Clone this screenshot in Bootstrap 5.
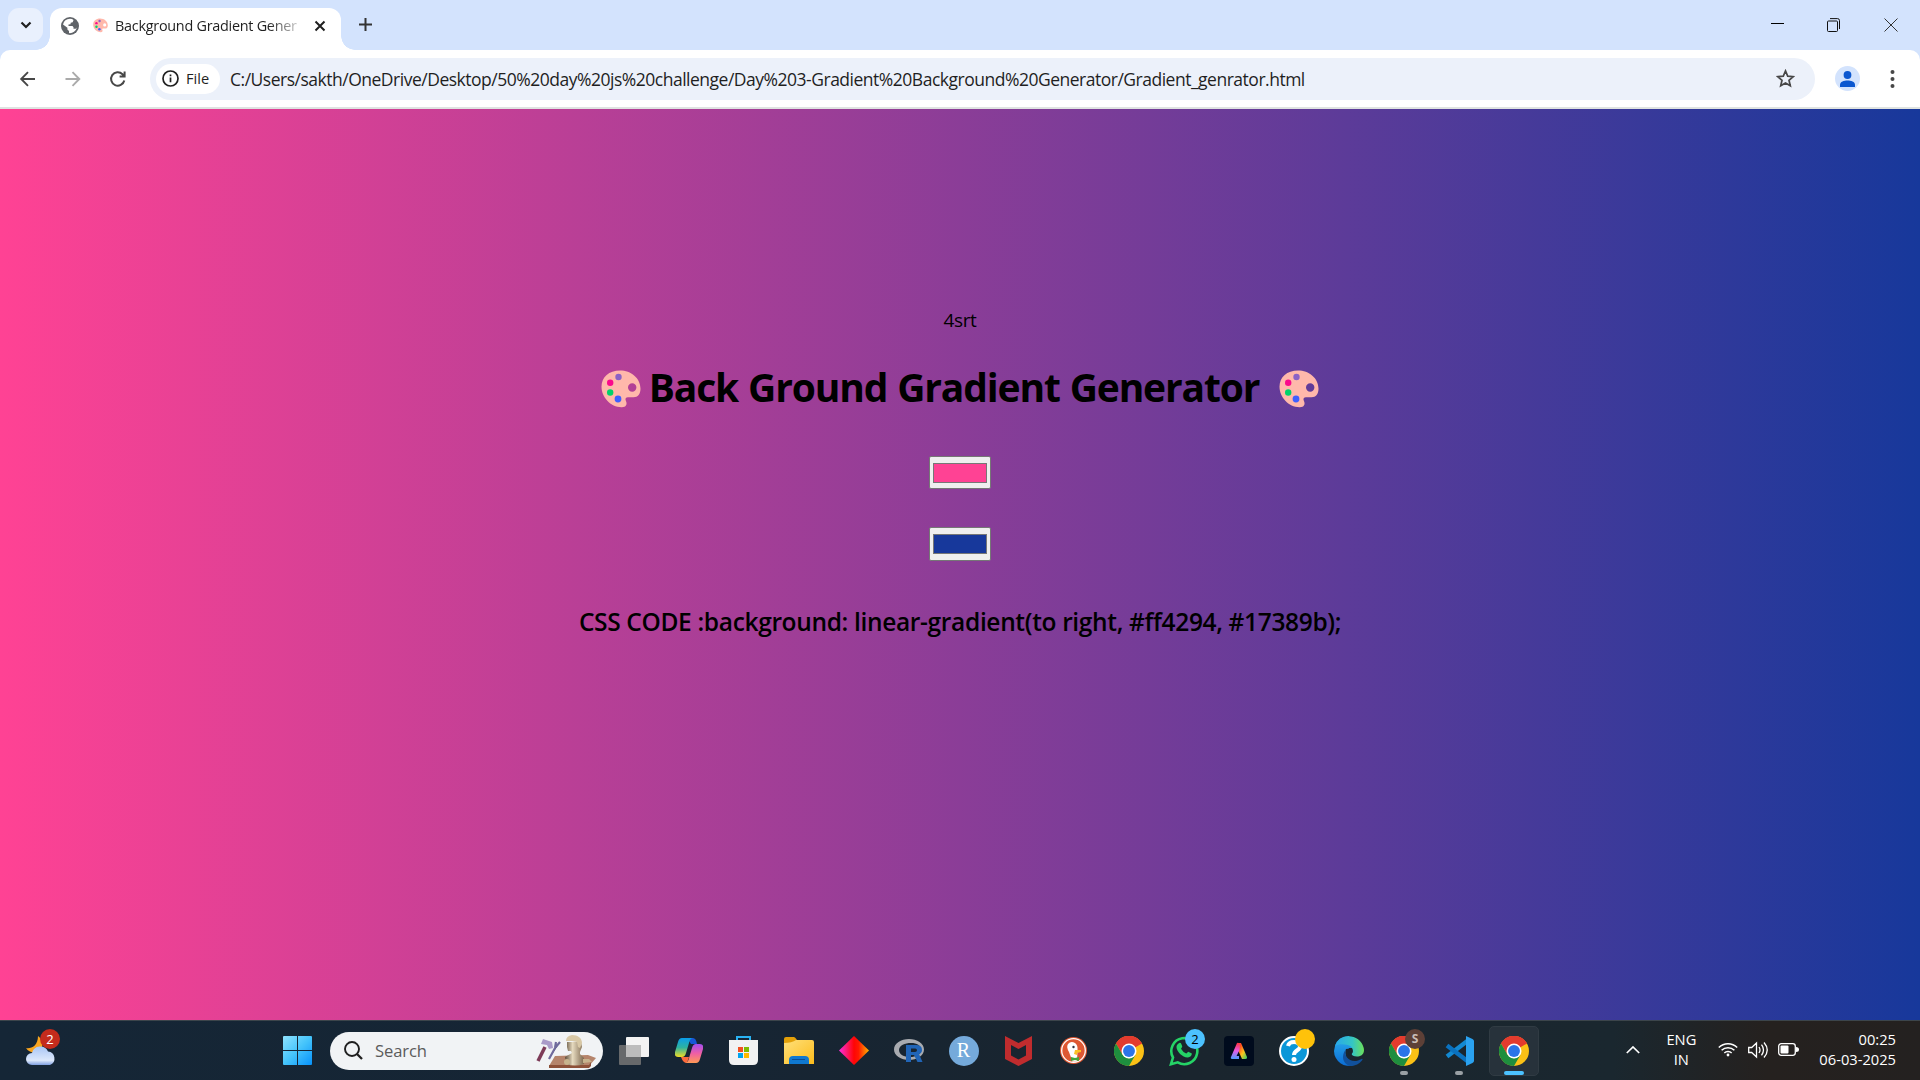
<!DOCTYPE html>
<html lang="en">
<head>
<meta charset="utf-8">
<title>Background Gradient Generator</title>
<link href="https://cdn.jsdelivr.net/npm/bootstrap@5.3.0/dist/css/bootstrap.min.css" rel="stylesheet">
<style>
html,body{height:100%;overflow:hidden}
body{font-family:"Open Sans","Noto Sans",sans-serif;color:#000;width:1920px;height:1080px}
svg{display:block;flex:none}
.tabstrip{height:50px;background:#d3e3fd}
.tab-search{width:35px;height:34px;border-radius:11px;background:#e9f0fd;margin:8px 0 0 8px}
.tab-item{width:291px;height:42px;margin:8px 0 0 7px;background:#fff;border-radius:12px 12px 0 0;padding:0 15px 7px 11px}
.tab-item::before,.tab-item::after{content:"";position:absolute;bottom:0;width:14px;height:14px}
.tab-item::before{left:-14px;background:radial-gradient(circle at 0 0,transparent 13.5px,#fff 14px)}
.tab-item::after{right:-14px;background:radial-gradient(circle at 100% 0,transparent 13.5px,#fff 14px)}
.tab-icon{margin-left:14px}
.tab-title{font-size:14.4px;letter-spacing:-.26px;margin-left:7px;color:#1f1f1f;-webkit-mask-image:linear-gradient(90deg,#000 84%,rgba(0,0,0,.25) 100%);mask-image:linear-gradient(90deg,#000 84%,rgba(0,0,0,.25) 100%)}
.tab-add{margin:18px 0 0 18px}
.win-buttons{height:49px;padding-right:22px}
.toolbar-top{height:59px;background:#d3e3fd}
.toolbar-in{height:59px;background:#fff;border-bottom:2px solid #dfe3e1;border-radius:10px 10px 0 0;padding-left:14px}
.nav-icons{gap:17px;margin-right:18px}
.omni{width:1665px;height:42px;border-radius:21px;background:#ecf1fa;padding:0 20px 0 6px}
.file-chip{width:64px;height:30px;border-radius:15px;background:#fff;padding-left:6px;gap:7px;font-size:14.6px;font-weight:500;color:#1f1f1f}
.url-text{font-size:17.5px;letter-spacing:-.49px;color:#1f1f1f;margin-left:10px;padding-top:1px}
.avatar{width:25px;height:25px;border-radius:50%;background:#d3e3fd;margin:0 30px 0 20px}
.stage{height:911px;background:linear-gradient(to right,#ff4294,#17389b);padding-top:196px}
.tag-line{font-size:19px;line-height:30px;letter-spacing:-.4px}
.headline{font-size:39px;font-weight:700;line-height:54px;margin-top:26px;padding-top:2px;letter-spacing:-1.15px}
.headline span{margin:-3px 20px 0 8px;word-spacing:1px}
.swatch{width:62px;height:33px;background:#efefef;border:1px solid #767676;border-radius:2px;padding:6px 3px}
.swatch i{display:block;width:54px;height:20px;border:1px solid #777}
.swatch-a{margin-top:42px}
.swatch-b{margin-top:38px;height:34px}
.css-code{font-size:24.5px;font-weight:600;line-height:36px;letter-spacing:-.34px;margin-top:43px}
.taskbar{height:60px;border-top:1px solid #3c454b;background:linear-gradient(90deg,#152636,#162534 35%,#1a252e 62%,#1a272f 84%,#25211f 92%,#242120)}
.weather{width:270px;padding-left:26px}
.weather-count{left:40px;top:-7px;background:#c42b1c}
.cell{width:55px;height:59px}
.find-box{width:273px;height:38px;border-radius:19px;background:#f1f3f5;margin:0 3px 0 5px;padding-left:14px;color:#5b5b5b;font-size:16.6px;letter-spacing:-.1px}
.find-box span{margin:1px 0 0 12px}
.find-art{margin-right:7px}
.r-studio{width:30px;height:30px;background:#75aadb;font:20px "Liberation Serif",serif}
.is-open{width:50px;height:50px;border-radius:5px;background:#27323b;border:1px solid #303b43}
.dash{bottom:5px;left:50%;transform:translateX(-50%);width:8px;height:4px;border-radius:2px;background:#9aa0a4}
.dash.on{width:20px;background:#4cc2ff}
.bubble{width:20px;height:20px;border-radius:50%;font-size:13px;line-height:20px;text-align:center}
.cell .bubble{right:6px;top:8px;background:#4cc2ff}
.cell .bubble-gold{background:#ffc20a}
.cell .bubble-s{background:#5d4037;color:#c9bdb8;font-size:12px}
.tray{color:#fff;font-size:14.7px;line-height:20px;padding:0 24px 2px 0}
.tray div{margin-top:-2px}
.lang{width:30px;margin:0 22px 0 26px}
</style>
<script src="https://cdn.jsdelivr.net/npm/bootstrap@5.3.0/dist/js/bootstrap.bundle.min.js"></script>
</head>
<body class="d-flex flex-column">
<svg width="0" height="0" class="position-absolute">
<defs>
<symbol id="palette" viewBox="0 0 40 38"><path fill="#ffb8ab" fill-rule="evenodd" d="M19 0.4C8 .4.5 7 .5 16.500c0 11 9 20.300 20 20.800 4.500.2 6-3 4.500-6-1.200-2.600-.2-4 2-4h5.500c4.500 0 7-3.500 7-8.500C39.500 8 30 .4 19 .4zM31.200 13.300a4.200 4.200 0 1 1 0 8.400 4.200 4.200 0 0 1 0-8.400z"/><circle cx="17.500" cy="7" r="3.200" fill="#8b62c6"/><circle cx="9.200" cy="12.700" r="3.200" fill="#fa0a8c"/><circle cx="9.200" cy="22.500" r="3.200" fill="#00d26a"/><circle cx="17" cy="29" r="3.400" fill="#3f5fff"/></symbol>
<symbol id="chrome" viewBox="0 0 48 48"><circle cx="24" cy="24" r="24" fill="#fbc116"/><path fill="#e33b2e" d="M24 24 3.200 12A24 24 0 0 1 44.800 12z"/><path fill="#e33b2e" d="M3.200 12 13.600 30 24 12H44.800A24 24 0 0 0 3.200 12z"/><path fill="#1e8e3e" d="M3.200 12 13.600 30 24 36 34.400 30 24 48A24 24 0 0 1 3.200 12z"/><circle cx="24" cy="24" r="12" fill="#fff"/><circle cx="24" cy="24" r="9.500" fill="#2b74e8"/></symbol>
</defs>
</svg>

<header class="tabstrip d-flex align-items-start">
  <div class="tab-search d-flex align-items-center justify-content-center"><svg width="12" height="8" viewBox="0 0 12 8" fill="none" stroke="#1f1f1f" stroke-width="2.200"><path d="M1.500 1.500 6 6l4.500-4.500"/></svg></div>
  <div class="tab-item position-relative d-flex align-items-center">
    <svg width="18" height="18" viewBox="0 0 18 18"><circle cx="9" cy="9" r="9" fill="#5f6368"/><path fill="#fff" d="M9 1.800 11 2l1.500 1-.8 2.200-2 .6-.2 1.500-2 .2v1.500h4l1 1.200v1.600h2.200l1.200-1.200A7.200 7.200 0 0 1 8 16.100v-2.200L6.400 12.500v-1.800L2 7.400A7.300 7.300 0 0 1 9 1.800z"/></svg>
    <svg class="tab-icon" width="15" height="15"><use href="#palette"/></svg>
    <div class="tab-title text-nowrap">Background Gradient Gener</div>
    <svg class="ms-auto" width="12" height="12" viewBox="0 0 12 12" stroke="#1f1f1f" stroke-width="2"><path d="m1.500 1.500 9 9m0-9-9 9"/></svg>
  </div>
  <svg class="tab-add" width="13" height="13" viewBox="0 0 13 13" stroke="#333" stroke-width="2"><path d="M6.500 0v13M0 6.500h13"/></svg>
  <div class="win-buttons ms-auto d-flex align-items-center">
    <svg width="56" height="13" viewBox="0 0 56 13"><path stroke="#000" d="M0 5.500h13"/></svg>
    <svg width="57" height="14" viewBox="0 0 57 14" fill="none" stroke="#111"><rect x=".5" y="3" width="10" height="10.500" rx="1"/><path d="M3 .6h7.500q2 0 2 2V11"/></svg>
    <svg width="14" height="14" viewBox="0 0 14 14" stroke="#333"><path d="m.5.5 13 13m0-13-13 13"/></svg>
  </div>
</header>

<div class="toolbar-top">
<nav class="toolbar-in d-flex align-items-center">
  <div class="nav-icons d-flex align-items-center">
  <svg width="28" height="28" viewBox="0 0 28 28" fill="none" stroke="#474747" stroke-width="1.900"><path d="M21 14H7.500m6.500-6.800L7.200 14l6.800 6.800"/></svg>
  <svg width="28" height="28" viewBox="0 0 28 28" fill="none" stroke="#aaa" stroke-width="1.900"><path d="M6.500 14H20M13.500 7.200l6.800 6.800-6.800 6.800"/></svg>
  <svg width="28" height="28" viewBox="0 0 28 28" fill="none" stroke="#474747" stroke-width="2"><path d="M20.300 15.500a6.700 6.700 0 1 1-1.800-6.300l1.700 1.800M20.600 6.500v5h-5"/></svg>
  </div>
  <div class="omni d-flex align-items-center">
    <div class="file-chip d-flex align-items-center"><svg width="17" height="17" viewBox="0 0 17 17" fill="none" stroke="#1f1f1f" stroke-width="1.700"><circle cx="8.500" cy="8.500" r="7.500"/><path d="M8.500 7.600v4.600M8.500 4.600v1.700"/></svg><span>File</span></div>
    <div class="url-text text-nowrap">C:/Users/sakth/OneDrive/Desktop/50%20day%20js%20challenge/Day%203-Gradient%20Background%20Generator/Gradient_genrator.html</div>
    <svg class="ms-auto" width="19" height="19" viewBox="0 0 19 19" fill="none" stroke="#474747" stroke-width="1.700"><path d="m9.500 1.900 2.200 5.200 5.600.5-4.300 3.700 1.300 5.500-4.800-2.900-4.800 2.900L6 11.300 1.700 7.600l5.600-.5z"/></svg>
  </div>
  <div class="avatar d-flex align-items-center justify-content-center"><svg width="15" height="16" viewBox="0 0 15 16" fill="#0b57d0"><circle cx="7.500" cy="4" r="3.900"/><path d="M0 16v-2.300C0 11 4 9.600 7.500 9.600S15 11 15 13.700V16z"/></svg></div>
  <svg width="5" height="18" viewBox="0 0 5 18" fill="#474747"><circle cx="2.500" cy="2" r="2"/><circle cx="2.500" cy="9" r="2"/><circle cx="2.500" cy="16" r="2"/></svg>
</nav>
</div>

<main class="stage d-flex flex-column align-items-center">
  <div class="tag-line">4srt</div>
  <h1 class="headline d-flex align-items-center mb-0 text-nowrap"><svg width="40" height="38"><use href="#palette"/></svg><span>Back Ground Gradient Generator</span><svg width="40" height="38"><use href="#palette"/></svg></h1>
  <div class="swatch swatch-a"><i style="background:#ff4294"></i></div>
  <div class="swatch swatch-b"><i style="background:#17389b"></i></div>
  <div class="css-code text-nowrap">CSS CODE :background: linear-gradient(to right, #ff4294, #17389b);</div>
</main>

<footer class="taskbar d-flex align-items-center">
  <div class="weather position-relative">
    <svg width="30" height="30" viewBox="0 0 30 30"><defs><linearGradient id="cl" x2="0" y2="1"><stop stop-color="#a9c6f5"/><stop offset=".75" stop-color="#dce8fb"/><stop offset="1" stop-color="#7f9fe0"/></linearGradient></defs><path fill="#f9a51f" d="M12 0c5 4 6 10 2 14S3 17 0 12c5 1 12-2 12-12z"/><path fill="url(#cl)" d="M6 29a6 6 0 0 1 0-12 8.500 8.500 0 0 1 16-1.500A7 7 0 0 1 24 29z"/></svg>
    <span class="weather-count bubble position-absolute text-white">2</span>
  </div>
  <div class="cell d-flex align-items-center justify-content-center"><svg width="29" height="29" viewBox="0 0 29 29"><defs><linearGradient id="wn" gradientUnits="userSpaceOnUse" x2="29" y2="29"><stop stop-color="#8fe3ff"/><stop offset=".5" stop-color="#45c4fb"/><stop offset="1" stop-color="#0792fb"/></linearGradient></defs><path fill="url(#wn)" d="M0 1q0-1 1-1h13v14H0zM15 0h13q1 0 1 1v13H15zM0 15h14v14H1q-1 0-1-1zM15 15h14v13q0 1-1 1H15z"/></svg></div>
  <div class="find-box d-flex align-items-center">
    <svg width="19" height="19" viewBox="0 0 19 19" fill="none" stroke="#1f1f1f" stroke-width="1.900"><circle cx="8" cy="8" r="7"/><path stroke-width="2.300" d="m13 13 5 5"/></svg>
    <span>Search</span>
    <svg class="find-art ms-auto" width="60" height="34" viewBox="0 0 60 34"><defs><linearGradient id="st"><stop stop-color="#5c4c3a"/><stop offset=".4" stop-color="#e6dabf"/><stop offset="1" stop-color="#7c674e"/></linearGradient></defs><path fill="#b5846b" d="m19 22 33-1 8 3-7 8H13z"/><path fill="#8d5038" d="M13 31h40l2-3v4l-2 2H13z"/><path stroke="#7d3b58" stroke-width="3.500" d="M2 27 9 13"/><path fill="#a99ac8" d="m7 5 9 3 1 6-4 1-2-4-6-1z"/><path stroke="#6f6a9c" stroke-width="2.200" d="m13 25 6-11 5-6m-5 6 1-6"/><path fill="url(#st)" d="M31 8h14l1 5-2 5v2l4 4v6q-9 3-18 0l-1-7 7-4-1-2h-3l-1-4z"/><path fill="#d8c8a6" d="M30 7q0-5 6-6c6 0 10 3 10 8l-2 5-2-1-1-5-5-1z"/><circle cx="31" cy="28" r="3" fill="#c7b38d"/><path fill="#c7b38d" d="M47 25h6l3 3-9 1z"/></svg>
  </div>
  <div class="cell d-flex align-items-center justify-content-center"><svg width="30" height="28" viewBox="0 0 30 28"><rect y="8" width="22" height="20" rx="1" fill="#67696b"/><rect x="7" width="23" height="20" rx="1" fill="#f3f3f3"/><path fill="#bcbcbc" d="M7 8h15v12H7z"/></svg></div>
  <div class="cell d-flex align-items-center justify-content-center"><svg width="28" height="25" viewBox="0 0 28 25"><defs><linearGradient id="c1" x2="0" y2="1"><stop stop-color="#0a9dea"/><stop offset=".5" stop-color="#2eb3a0"/><stop offset="1" stop-color="#f2dc22"/></linearGradient><linearGradient id="c2" x2="0" y2="1"><stop stop-color="#a44df0"/><stop offset=".5" stop-color="#ef5fa4"/><stop offset="1" stop-color="#ff9a55"/></linearGradient></defs><path fill="#1757d6" d="M12 0h6q3 0 4 6h-6z"/><path fill="#fb6a3c" d="M6 19h8l-2 6q-4 0-6-6z"/><path fill="url(#c1)" d="M7 0h11q-3 0-4 5l-3 10q-1 4-4 4H3q-4 0-3-5L3 4Q4 0 7 0z"/><path fill="url(#c2)" d="M21 25H10q3 0 4-5l3-10q1-4 4-4h4q4 0 3 5l-3 10q-1 4-4 4z"/></svg></div>
  <div class="cell d-flex align-items-center justify-content-center"><svg width="29" height="29" viewBox="0 0 29 29"><path fill="none" stroke="#29b3f3" stroke-width="2" d="M8 6V1h13v5"/><path fill="#f2f2f2" d="M0 4h29v20q0 5-5 5H5q-5 0-5-5z"/><path fill="#f25022" d="M9 11h5v5H9z"/><path fill="#7fba00" d="M15 11h5v5h-5z"/><path fill="#00a4ef" d="M9 17h5v5H9z"/><path fill="#ffb900" d="M15 17h5v5h-5z"/></svg></div>
  <div class="cell d-flex align-items-center justify-content-center"><svg width="30" height="27" viewBox="0 0 30 27"><defs><linearGradient id="fo" x2="1" y2="1"><stop stop-color="#ffe07a"/><stop offset="1" stop-color="#fcbc1c"/></linearGradient></defs><path fill="#e3a008" d="M0 2q0-2 2-2h8q1 0 3 3v5H0z"/><path fill="url(#fo)" d="M0 6q8 0 12-3h16q2 0 2 2v22H0z"/><path fill="#0f78d0" d="M5 27v-4q0-4 4-4h12q4 0 4 4v4z"/><path stroke="#0a4c94" d="M8 22.500h13"/></svg></div>
  <div class="cell d-flex align-items-center justify-content-center"><svg width="30" height="29" viewBox="0 0 30 29"><defs><linearGradient id="di"><stop stop-color="#fb2ee0"/><stop offset=".5" stop-color="#ff0505"/><stop offset=".65" stop-color="#ff1800"/><stop offset="1" stop-color="#ffb400"/></linearGradient></defs><path fill="url(#di)" d="m15 0 15 14.500L15 29 0 14.500z"/></svg></div>
  <div class="cell d-flex align-items-center justify-content-center"><svg width="30" height="24" viewBox="0 0 30 24"><path fill="#a8abb0" fill-rule="evenodd" d="M15 0c8 0 15 4.500 15 10.500S23 21 15 21 0 16.500 0 10.500 7 0 15 0zm2 4C11 4 5 6.500 5 11s5 7 11 7 11-2.500 11-7-4-7-10-7z"/><path fill="#2165b7" fill-rule="evenodd" d="M12 6h10q6 0 6 5 0 3-3 4l3.500 8h-5L20 16h-3v7h-5zm5 3.500v3.500h4q2 0 2-1.800t-2-1.700z"/></svg></div>
  <div class="cell d-flex align-items-center justify-content-center"><span class="r-studio rounded-circle text-white d-flex align-items-center justify-content-center">R</span></div>
  <div class="cell d-flex align-items-center justify-content-center"><svg width="27" height="30" viewBox="0 0 27 30"><path fill="#c02c2e" fill-rule="evenodd" d="m0 0 13.500 7L27 0v23l-13.500 7L0 23zM6 9v10.500l7.500 4 7.500-4V9l-7.500 4z"/></svg></div>
  <div class="cell d-flex align-items-center justify-content-center"><svg width="27" height="27" viewBox="0 0 27 27"><circle cx="13.500" cy="13.500" r="13.500" fill="#de5833"/><circle cx="13.500" cy="13.500" r="11.800" fill="none" stroke="#fff" stroke-width="1.300"/><path fill="#fff" d="M8 7q3-3.500 7-1 3 2 2.500 7L17 24.500l-4.500.3L9 15q-3-5-1-8z"/><path fill="#fdc224" d="M15 13h6v2l-4 1v2l-3-1z"/><path fill="#45a63b" d="m11 20 4 1 4-1v4l-4-1-4 1z"/><circle cx="13.500" cy="10" r="1.200" fill="#334"/></svg></div>
  <div class="cell d-flex align-items-center justify-content-center"><svg width="30" height="30"><use href="#chrome"/></svg></div>
  <div class="cell position-relative d-flex align-items-center justify-content-center"><svg width="30" height="30" viewBox="0 0 30 30"><path fill="none" stroke="#25d366" stroke-width="2.600" d="M2 28.200 4 21.500A13 13 0 1 1 8.700 26.300z"/><path fill="#25d366" d="M9.500 7.500c1-1 2.300-.8 2.700.3l1 2.500c.3 1-1.400 2-1 2.600a10 10 0 0 0 5 4.500c.8.300 1.700-1.800 2.500-1.500l2.800 1.400c.8.500 0 4.200-4 4.200-5 0-11-6-11-10.500 0-1.500.8-2.600 2-3.500z"/></svg><span class="bubble position-absolute">2</span></div>
  <div class="cell d-flex align-items-center justify-content-center"><svg width="30" height="30" viewBox="0 0 30 30"><defs><linearGradient id="ad" x2="1" y2="1"><stop stop-color="#ff3f4f"/><stop offset=".25" stop-color="#ff4a20"/><stop offset=".6" stop-color="#ffc41c"/><stop offset="1" stop-color="#27d06b"/></linearGradient><linearGradient id="ae" x2="0" y2="1"><stop stop-color="#ff3038"/><stop offset=".5" stop-color="#e65be8"/><stop offset="1" stop-color="#4a9cff"/></linearGradient></defs><rect width="30" height="30" rx="4" fill="#000b1d"/><path fill="url(#ad)" d="M13 7h4l6 14q.5 2-1.500 2H18l-4-9z"/><path fill="url(#ae)" d="M13 7q2-1 3 2l-.5 5-3 6H15v3H9q-3 0-2-2z"/></svg></div>
  <div class="cell position-relative d-flex align-items-center justify-content-center"><svg width="30" height="30" viewBox="0 0 30 30"><circle cx="15" cy="15" r="14" fill="#0b97d8" stroke="#fff" stroke-width="2"/><path fill="none" stroke="#fff" stroke-width="4" d="M9 10q1-4 6-4 6 0 6 4.500c0 4-6 3.500-6 8.500"/><circle cx="15" cy="23.500" r="2.500" fill="#fff"/></svg><span class="bubble bubble-gold position-absolute"></span></div>
  <div class="cell d-flex align-items-center justify-content-center"><svg width="30" height="30" viewBox="0 0 30 30"><defs><linearGradient id="e1"><stop stop-color="#29a8ea"/><stop offset=".6" stop-color="#35c6c4"/><stop offset="1" stop-color="#6be05a"/></linearGradient><linearGradient id="e2" x2="0" y2="1"><stop stop-color="#2cb0ee"/><stop offset="1" stop-color="#0b6cd4"/></linearGradient></defs><path fill="url(#e2)" d="M1 10Q4 0 15 0l5 12-8 1q-2 6 2 11l6 5A15 15 0 0 1 0 15z"/><path fill="#1a252e" d="M15 12h8v9h-6q-4-4-2-9z"/><path fill="url(#e1)" d="M1 10A15 15 0 0 1 30 14c0 5-4 6.500-7 6.500-4 0-6-1.500-5-3 2-2 1-7-4-8.500C9 7.500 4 8 1 10z"/><path fill="#11519c" d="M12 13c-3 6 3 13 10 12 3-.3 5-2 6-2.200.8-.1.8.8 0 1.700A15 15 0 0 1 17 30C10 29 6 21 12 13z"/></svg></div>
  <div class="cell position-relative d-flex align-items-center justify-content-center"><svg width="30" height="30"><use href="#chrome"/></svg><span class="bubble bubble-s position-absolute fw-bold">S</span><span class="dash position-absolute"></span></div>
  <div class="cell position-relative d-flex align-items-center justify-content-center"><svg width="30" height="30" viewBox="0 0 30 30"><path fill="none" stroke="#1389d2" stroke-width="4.500" stroke-linejoin="round" d="M24 4.500 3 20.500"/><path fill="none" stroke="#0a72c0" stroke-width="4.500" stroke-linejoin="round" d="M24 25.500 3 9.500"/><path fill="#2aa2f0" d="m22 0 6.500 3q1.500.8 1.500 2v20q0 1.200-1.500 2L22 30z"/></svg><span class="dash position-absolute"></span></div>
  <div class="cell position-relative d-flex align-items-center justify-content-center"><div class="is-open d-flex align-items-center justify-content-center"><svg width="30" height="30"><use href="#chrome"/></svg></div><span class="dash on position-absolute"></span></div>
  <div class="tray ms-auto d-flex align-items-center">
    <svg width="14" height="8" viewBox="0 0 14 8" fill="none" stroke="#fff" stroke-width="1.700"><path d="m.8 7 6.200-6 6.200 6"/></svg>
    <div class="lang text-center">ENG<br>IN</div>
    <svg width="20" height="15" viewBox="0 0 20 15" fill="none" stroke="#fff" stroke-width="1.500"><path d="M.8 5.500a13 13 0 0 1 18.400 0M3.600 8.300a9 9 0 0 1 12.800 0M6.300 11a5.200 5.200 0 0 1 7.400 0"/><circle cx="10" cy="13" r="1.400" fill="#fff" stroke="none"/></svg>
    <svg style="margin-left:10px" width="21" height="18" viewBox="0 0 21 18" fill="none" stroke="#fff" stroke-width="1.300"><path d="M.7 6.500h3L8.500 2v14l-4.800-4.500h-3zM11 6q2 3 0 6M13.500 3.700q4 5.300 0 10.600M16 1.500q6.500 7.500 0 15"/></svg>
    <svg style="margin-left:9px" width="21" height="13" viewBox="0 0 21 13"><rect x=".7" y=".7" width="16.600" height="11.600" rx="2.500" fill="none" stroke="#fff" stroke-width="1.300"/><rect x="2.500" y="2.500" width="8" height="8" rx="1" fill="#fff"/><path fill="#fff" d="M18 4q3 0 3 2.500T18 9z"/></svg>
    <div class="text-end" style="margin-left:20px">00:25<br>06-03-2025</div>
  </div>
</footer>
</body>
</html>
